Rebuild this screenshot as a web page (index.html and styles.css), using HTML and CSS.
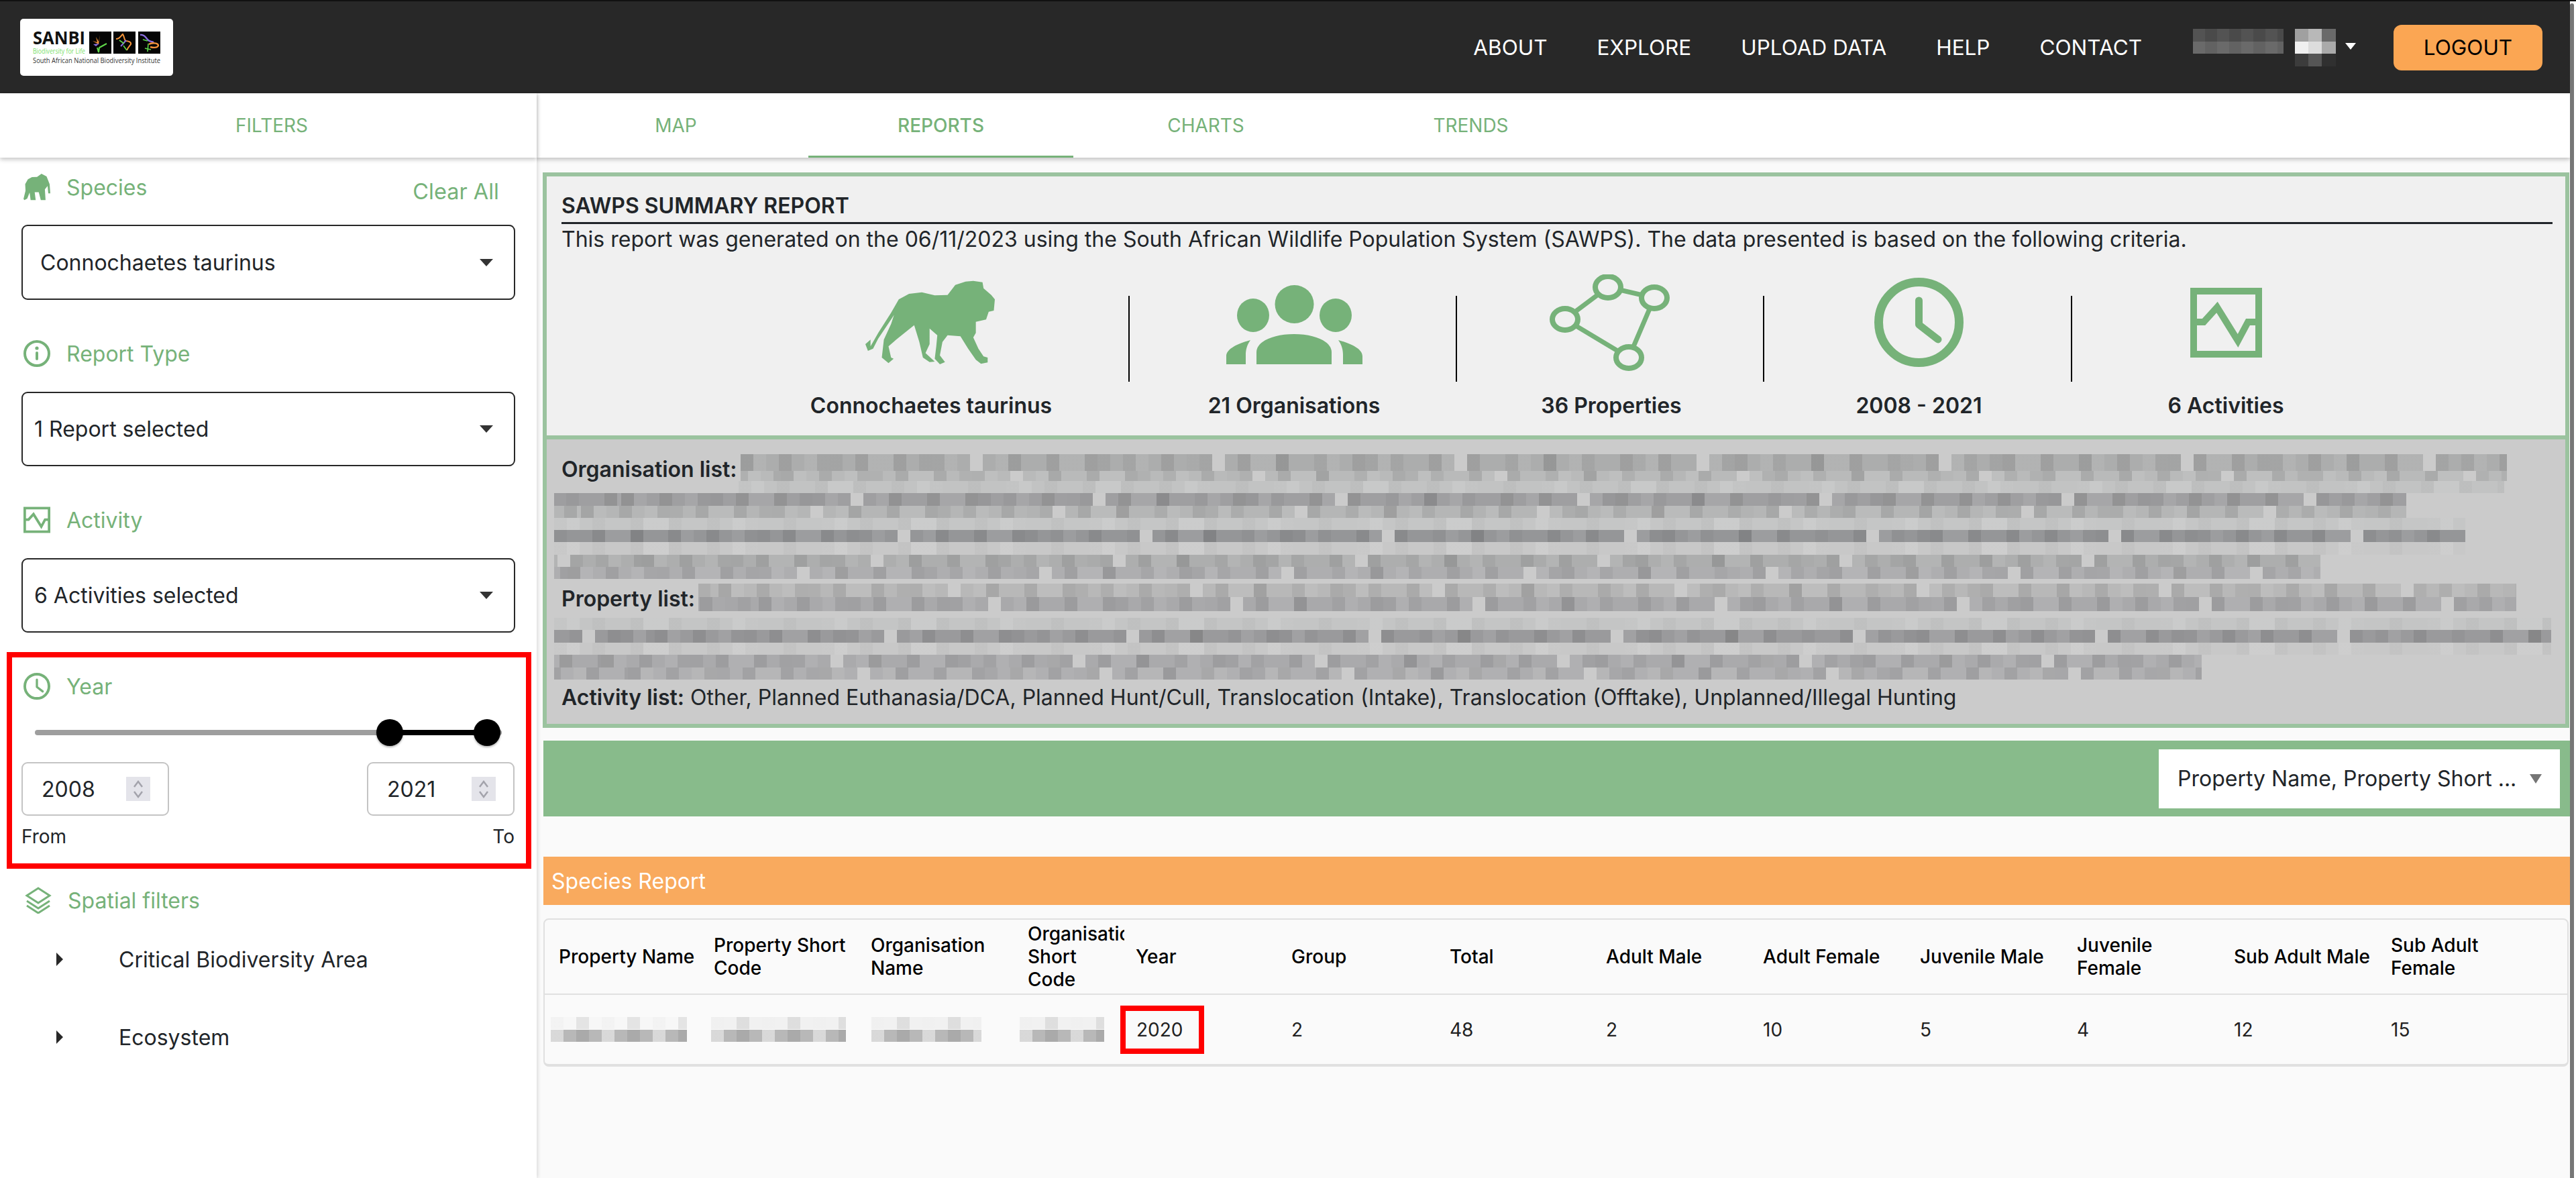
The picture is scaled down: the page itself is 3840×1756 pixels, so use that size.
FILE: index.html
```html
<!DOCTYPE html>
<html>

<head>
<meta charset="utf-8">
<title>SAWPS Reports</title>
<link rel="stylesheet" href="styles.css">
</head>

<body>

	<!--Shared icon shapes-->
	<svg class="icon-defs" xmlns="http://www.w3.org/2000/svg">
		<symbol id="icon-clock" viewBox="0 0 133 133">
			<circle cx="66.5" cy="66.5" r="60" fill="none" stroke="currentColor" stroke-width="13"/>
			<path d="M66.5 34V70L95 92" fill="none" stroke="currentColor" stroke-width="11" stroke-linecap="round" stroke-linejoin="round"/>
		</symbol>
		<symbol id="icon-activity" viewBox="0 0 107 104">
			<rect x="5" y="5" width="97" height="94" fill="none" stroke="currentColor" stroke-width="10"/>
			<path d="M8 51H20L40 29L71 79L86 51H102" fill="none" stroke="currentColor" stroke-width="10"/>
		</symbol>
	</svg>

	<div class="page">
		<!--Top navigation-->
		<header class="topbar">
			<div class="logo">
				<svg width="228" height="85" viewBox="0 0 228 85" xmlns="http://www.w3.org/2000/svg">
					<text x="19" y="38" class="logo-name" textLength="78" lengthAdjust="spacingAndGlyphs">SANBI</text>
					<text x="19" y="52" class="logo-tag" textLength="78" lengthAdjust="spacingAndGlyphs">Biodiversity for Life</text>
					<text x="19" y="66" class="logo-full" textLength="190" lengthAdjust="spacingAndGlyphs">South African National Biodiversity Institute</text>
					<rect x="103" y="19" width="33" height="33" fill="#050505"/>
					<rect x="139" y="19" width="33" height="33" fill="#050505"/>
					<rect x="176" y="19" width="33" height="33" fill="#050505"/>
					<path d="M119 24L117 34L113 27L115 35L108 33L117 38Z" fill="#f5943a"/>
					<path d="M109 38L118 37L113 41Z" fill="#8a6fe0"/>
					<path d="M129 37L118 43L117 50L115 43" fill="none" stroke="#5fd84a" stroke-width="2"/>
					<path d="M143 30C149 30 151 24 153 23C155 26 155 30 157 33C162 33 166 35 165 38C163 41 161 42 159 47" fill="none" stroke="#f5943a" stroke-width="2"/>
					<path d="M150 41L158 32" stroke="#8a6fe0" stroke-width="2"/>
					<path d="M148 32L155 37M154 40L159 47" stroke="#5fd84a" stroke-width="1.6"/>
					<path d="M179 24C184 23 187 27 190 31C193 35 196 33 199 35" fill="none" stroke="#8a6fe0" stroke-width="2.4"/>
					<path d="M192 38C196 35 206 36 206 40C204 44 198 43 194 42" fill="none" stroke="#f5943a" stroke-width="2.4"/>
					<path d="M183 31L190 33M191 37L190 49M186 44L195 46" stroke="#5fd84a" stroke-width="1.6"/>
				</svg>
			</div>
			<nav class="nav">
				<a href="#">ABOUT</a>
				<a href="#">EXPLORE</a>
				<a href="#">UPLOAD DATA</a>
				<a href="#">HELP</a>
				<a href="#">CONTACT</a>
			</nav>
			<div class="user">
				<div class="user-name"></div>
				<div class="user-tail"></div>
				<span class="user-caret"></span>
			</div>
			<button class="logout">LOGOUT</button>
		</header>

		<div class="main">
			<!--Filters column-->
			<aside class="sidebar">
				<div class="side-tab">FILTERS</div>
				<div class="side-body">
					<div class="filter-head filter-head-first">
						<svg class="filter-icon" viewBox="67 785 79 103" preserveAspectRatio="none" xmlns="http://www.w3.org/2000/svg">
							<path d="M67 882L73 850L72 825L80 806L92 798L107 797L120 785L135 795L144 825L146 860L140 860L138 832L130 845L132 886L118 886L112 856L100 856L103 886L88 886L85 857L78 880L70 886Z" fill="currentColor"/>
						</svg>
						<span class="filter-title">Species</span>
						<a class="clear-all" href="#">Clear All</a>
					</div>
					<div class="select select-species"><span>Connochaetes taurinus</span><i class="caret"></i></div>

					<div class="filter-head">
						<svg class="filter-icon" viewBox="0 0 40 40" xmlns="http://www.w3.org/2000/svg">
							<circle cx="20" cy="20" r="18" fill="none" stroke="currentColor" stroke-width="4"/>
							<circle cx="20" cy="12" r="2.6" fill="currentColor"/>
							<rect x="18" y="17" width="4" height="13" rx="2" fill="currentColor"/>
						</svg>
						<span class="filter-title">Report Type</span>
					</div>
					<div class="select"><span>1 Report selected</span><i class="caret"></i></div>

					<div class="filter-head">
						<svg class="filter-icon"><use href="#icon-activity"/></svg>
						<span class="filter-title">Activity</span>
					</div>
					<div class="select"><span>6 Activities selected</span><i class="caret"></i></div>

					<!--Year block has the red marker round it-->
					<div class="year-box">
						<div class="filter-head filter-head-year">
							<svg class="filter-icon"><use href="#icon-clock"/></svg>
							<span class="filter-title">Year</span>
						</div>
						<div class="slider">
							<div class="slider-active"></div>
							<span class="thumb thumb-from"></span>
							<span class="thumb thumb-to"></span>
						</div>
						<div class="year-inputs">
							<div class="year-input">
								<span>2008</span>
								<span class="spinner">
									<svg width="36" height="36" viewBox="0 0 36 36" xmlns="http://www.w3.org/2000/svg"><path d="M12 15L18 7L24 15M12 22L18 30L24 22" fill="none" stroke="#a3a3ab" stroke-width="2.5"/></svg>
								</span>
							</div>
							<div class="year-input">
								<span>2021</span>
								<span class="spinner">
									<svg width="36" height="36" viewBox="0 0 36 36" xmlns="http://www.w3.org/2000/svg"><path d="M12 15L18 7L24 15M12 22L18 30L24 22" fill="none" stroke="#a3a3ab" stroke-width="2.5"/></svg>
								</span>
							</div>
						</div>
						<div class="year-labels"><span>From</span><span>To</span></div>
					</div>

					<div class="filter-head filter-head-spatial">
						<svg class="filter-icon" viewBox="0 0 40 40" xmlns="http://www.w3.org/2000/svg">
							<path d="M20 2L37 13L20 24L3 13Z M3 21L20 32L37 21 M3 28L20 39L37 28" fill="none" stroke="currentColor" stroke-width="3"/>
						</svg>
						<span class="filter-title">Spatial filters</span>
					</div>
					<div class="tree-item"><i class="tree-arrow"></i><span>Critical Biodiversity Area</span></div>
					<div class="tree-item"><i class="tree-arrow"></i><span>Ecosystem</span></div>
				</div>
			</aside>

			<!--Report column-->
			<section class="content">
				<div class="tabs">
					<a class="tab" href="#">MAP</a>
					<a class="tab active" href="#">REPORTS</a>
					<a class="tab" href="#">CHARTS</a>
					<a class="tab" href="#">TRENDS</a>
				</div>

				<div class="summary">
					<div class="summary-top">
						<h1 class="summary-title">SAWPS SUMMARY REPORT</h1>
						<p class="summary-text">This report was generated on the 06/11/2023 using the South African Wildlife Population System (SAWPS). The data presented is based on the following criteria.</p>
						<div class="stats">
							<div class="stat stat-species">
								<div class="stat-icon">
									<svg width="193" height="125" viewBox="640 505 252 375" preserveAspectRatio="none" xmlns="http://www.w3.org/2000/svg">
										<path d="M850 507L868 513L870 540L885 570L892 590L890 640L880 645L875 680L855 690L855 740L850 760L860 810L870 845L878 850L878 872L865 878L855 860L840 810L825 755L800 750L790 780L785 840L795 870L785 880L775 855L778 800L780 750L765 720L765 790L757 830L775 868L765 870L752 850L745 780L735 705L700 770L685 800L690 850L695 855L685 875L672 850L676 770L690 700L700 630L710 610L690 680L665 765L655 810L645 820L640 790L650 770L650 800L665 740L690 650L705 590L725 565L750 558L775 572L800 570L815 525L835 510Z" fill="currentColor"/>
									</svg>
								</div>
								<div class="stat-label">Connochaetes taurinus</div>
							</div>
							<div class="stat">
								<div class="stat-icon">
									<svg class="icon-group" width="203" height="118" viewBox="0 0 203 118" xmlns="http://www.w3.org/2000/svg">
										<ellipse cx="40" cy="45" rx="24" ry="25" fill="currentColor"/>
										<ellipse cx="163" cy="45" rx="24" ry="25" fill="currentColor"/>
										<ellipse cx="101.500" cy="28.500" rx="29" ry="28.500" fill="currentColor" stroke="#f0f0f0" stroke-width="14" paint-order="stroke"/>
										<path d="M45 118V100C45 84 70 73 101 73C132 73 157 84 157 100V118Z" fill="currentColor"/>
										<path d="M36 82C14 88 0 96 0 106V118H29V104C29 96 31 89 36 82Z" fill="currentColor"/>
										<path d="M167 82C189 88 203 96 203 106V118H174V104C174 96 172 89 167 82Z" fill="currentColor"/>
									</svg>
								</div>
								<div class="stat-label">21 Organisations</div>
							</div>
							<div class="stat">
								<div class="stat-icon">
									<svg class="icon-network" width="180" height="144" viewBox="0 0 180 144" xmlns="http://www.w3.org/2000/svg">
										<path d="M87 19L156 35L118 124L23 67Z" fill="none" stroke="currentColor" stroke-width="7"/>
										<ellipse cx="87" cy="19" rx="19" ry="16" fill="#f0f0f0" stroke="currentColor" stroke-width="8"/>
										<ellipse cx="156" cy="35" rx="19" ry="16" fill="#f0f0f0" stroke="currentColor" stroke-width="8"/>
										<ellipse cx="23" cy="67" rx="19" ry="16" fill="#f0f0f0" stroke="currentColor" stroke-width="8"/>
										<ellipse cx="118" cy="124" rx="19" ry="16" fill="#f0f0f0" stroke="currentColor" stroke-width="8"/>
									</svg>
								</div>
								<div class="stat-label">36 Properties</div>
							</div>
							<div class="stat">
								<div class="stat-icon">
									<svg width="133" height="133"><use href="#icon-clock"/></svg>
								</div>
								<div class="stat-label">2008 - 2021</div>
							</div>
							<div class="stat">
								<div class="stat-icon">
									<svg width="107" height="104"><use href="#icon-activity"/></svg>
								</div>
								<div class="stat-label">6 Activities</div>
							</div>
						</div>
					</div>

					<div class="summary-lists">
						<!--Names are hidden in the source picture, so these rows are only the mosaic-->
						<div class="list-first">
							<b class="list-label">Organisation list:</b>
							<div class="mosaic-stack">
								<div class="mosaic m1"></div>
								<div class="mosaic m2"></div>
								<div class="mosaic faint m3"></div>
							</div>
						</div>
						<div class="mosaic m4"></div>
						<div class="mosaic m5"></div>
						<div class="mosaic faint m6"></div>
						<div class="mosaic m7"></div>
						<div class="mosaic faint m8"></div>
						<div class="mosaic m9"></div>
						<div class="mosaic m10"></div>

						<div class="list-first list-property">
							<b class="list-label">Property list:</b>
							<div class="mosaic-stack">
								<div class="mosaic m11"></div>
								<div class="mosaic m12"></div>
							</div>
						</div>
						<div class="mosaic faint m13"></div>
						<div class="mosaic m14"></div>
						<div class="mosaic faint m15"></div>
						<div class="mosaic m16"></div>
						<div class="mosaic m17"></div>

						<p class="activity-list"><b>Activity list:</b> Other, Planned Euthanasia/DCA, Planned Hunt/Cull, Translocation (Intake), Translocation (Offtake), Unplanned/Illegal Hunting</p>
					</div>
				</div>

				<div class="column-bar">
					<div class="column-select"><span>Property Name, Property Short ...</span><i class="caret caret-grey"></i></div>
				</div>

				<div class="report-title">Species Report</div>

				<div class="report-table">
					<div class="row row-head">
						<div class="cell">Property Name</div>
						<div class="cell">Property Short Code</div>
						<div class="cell">Organisation Name</div>
						<div class="cell">Organisation Short Code</div>
						<div class="cell cell-year">Year</div>
						<div class="cell">Group</div>
						<div class="cell">Total</div>
						<div class="cell">Adult Male</div>
						<div class="cell">Adult Female</div>
						<div class="cell">Juvenile Male</div>
						<div class="cell">Juvenile Female</div>
						<div class="cell">Sub Adult Male</div>
						<div class="cell">Sub Adult Female</div>
					</div>
					<div class="row row-data">
						<div class="cell"><div class="blur blur-a"><i></i><i></i></div></div>
						<div class="cell"><div class="blur blur-b"><i></i><i></i></div></div>
						<div class="cell"><div class="blur blur-c"><i></i><i></i></div></div>
						<div class="cell"><div class="blur blur-d"><i></i><i></i></div></div>
						<div class="cell cell-year-mark"><span class="year-mark">2020</span></div>
						<div class="cell">2</div>
						<div class="cell">48</div>
						<div class="cell">2</div>
						<div class="cell">10</div>
						<div class="cell">5</div>
						<div class="cell">4</div>
						<div class="cell">12</div>
						<div class="cell">15</div>
					</div>
				</div>
			</section>
		</div>
	</div>

	<!--Browser scrollbar-->
	<div class="scrollbar"><div class="scroll-thumb"></div></div>

</body>
</html>
```
FILE: styles.css
```css
* {
    box-sizing: border-box;
}
html, body {
    height: 100%;
}
body {
    margin: 0;
    display: flex;
    height: 1756px;
    overflow: hidden;
    background-color: #fff;
    border-top: 2px solid #111;
    font-family: "Inter", "Liberation Sans", sans-serif;
    font-size: 32px;
    color: #212529;
}
a {
    color: inherit;
    text-decoration: none;
}
i {
    display: block;
}
.icon-defs {
    position: absolute;
    width: 0;
    height: 0;
}
.page {
    width: 3831px;
    display: flex;
    flex-direction: column;
}

/* Scrollbar on the far right */
.scrollbar {
    width: 9px;
    padding-top: 3px;
}
.scroll-thumb {
    width: 6px;
    height: 100%;
    background-color: #777;
    border-radius: 3px 3px 0 0;
}

/* Top bar */
.topbar {
    height: 137px;
    flex-shrink: 0;
    display: flex;
    align-items: center;
    padding: 0 41px 0 30px;
    background-color: #282828;
}
.logo {
    width: 228px;
    height: 85px;
    background-color: #fff;
    border-radius: 5px;
}
.logo svg {
    display: block;
}
.logo-name {
    font-family: "Open Sans", sans-serif;
    font-size: 26px;
    font-weight: 700;
    fill: #111;
}
.logo-tag {
    font-family: "Open Sans", sans-serif;
    font-size: 10px;
    fill: #7be06b;
}
.logo-full {
    font-family: "Open Sans", sans-serif;
    font-size: 10px;
    fill: #333;
}
.nav {
    margin-left: auto;
    display: flex;
    gap: 74px;
    color: #fff;
    font-size: 31.5px;
}
.user {
    margin-left: 76px;
    width: 299px;
    height: 56px;
    position: relative;
}
.user-name {
    position: absolute;
    left: 0;
    top: 0;
    width: 135px;
    height: 37px;
    background:
        repeating-linear-gradient(90deg, rgba(255, 255, 255, 0.05) 0 18px, transparent 18px 36px),
        linear-gradient(#4a4a4a 0 19px, #626262 19px 37px);
}
.user-tail {
    position: absolute;
    left: 152px;
    top: 0;
    width: 61px;
    height: 56px;
    background:
        linear-gradient(90deg, #a0a0a0 0 20px, #b8b8b8 20px 40px, #6a6a6a 40px) 0 0 / 100% 19px no-repeat,
        linear-gradient(90deg, #f0f0f0 0 20px, #ddd 20px 40px, #aaa 40px) 0 19px / 100% 18px no-repeat,
        linear-gradient(90deg, #3c3c3c 0 20px, #555 20px 40px, #303030 40px) 0 37px / 100% 19px no-repeat;
}
.user-caret {
    position: absolute;
    left: 227px;
    top: 21px;
    width: 0;
    height: 0;
    border-left: 8px solid transparent;
    border-right: 8px solid transparent;
    border-top: 10px solid #fff;
}
.logout {
    width: 222px;
    height: 68px;
    border: none;
    border-radius: 12px;
    background-color: #fba653;
    color: #000;
    font-family: inherit;
    font-size: 31.5px;
}

.main {
    flex: 1;
    display: flex;
    min-height: 0;
}

/* Filters column */
.sidebar {
    width: 800px;
    flex-shrink: 0;
    background-color: #fff;
    box-shadow: 2px 0 5px rgba(0, 0, 0, 0.12);
    position: relative;
}
.side-tab {
    height: 96px;
    display: flex;
    align-items: center;
    justify-content: center;
    padding-left: 10px;
    color: #76b279;
    font-size: 28px;
    box-shadow: 0 3px 6px rgba(0, 0, 0, 0.22);
}
.side-body {
    padding: 0 32px;
}
.filter-head {
    height: 40px;
    display: flex;
    align-items: center;
    gap: 24px;
    color: #76b279;
    margin: 60px 0 37px 3px;
}
.filter-head-first {
    margin-top: 24px;
    margin-bottom: 36px;
}
.filter-head-year {
    margin: 0 0 0 3px;
}
.filter-head-spatial {
    margin: 27px 0 10px 5px;
}
.filter-icon {
    width: 40px;
    height: 40px;
    flex-shrink: 0;
    color: #76b279;
}
.clear-all {
    margin-left: auto;
    margin-right: 24px;
    margin-top: 13px;
    font-size: 32.5px;
}
.select {
    height: 111px;
    width: 736px;
    display: flex;
    align-items: center;
    justify-content: space-between;
    padding: 0 31px 0 17px;
    border: 2.5px solid #282828;
    border-radius: 9px;
}
.select-species {
    height: 112px;
    padding-left: 26px;
}
.caret {
    width: 0;
    height: 0;
    border-left: 10px solid transparent;
    border-right: 10px solid transparent;
    border-top: 11px solid #333;
}
.caret-grey {
    border-left-width: 9px;
    border-right-width: 9px;
    border-top: 14px solid #757575;
}

/* Year block */
.year-box {
    margin: 29px -24px 0 -22px;
    height: 323px;
    padding: 23px 17px 0 14px;
    border: 8px solid #f00;
}
.slider {
    margin: 29px 19px 0 20px;
    height: 40px;
    position: relative;
    display: flex;
    align-items: center;
}
.slider::before {
    content: "";
    width: 100%;
    height: 8px;
    background-color: #9e9e9e;
    border-radius: 4px;
}
.slider-active {
    position: absolute;
    left: 76%;
    width: 20.800%;
    height: 8px;
    background-color: #000;
}
.thumb {
    position: absolute;
    width: 40px;
    height: 40px;
    margin-left: -20px;
    border-radius: 50%;
    background-color: #000;
    box-shadow: 0 2px 3px rgba(0, 0, 0, 0.3);
}
.thumb-from {
    left: 76%;
}
.thumb-to {
    left: 96.800%;
}
.year-inputs {
    margin-top: 24px;
    display: flex;
    justify-content: space-between;
}
.year-input {
    width: 220px;
    height: 80px;
    display: flex;
    align-items: center;
    justify-content: space-between;
    padding: 0 26px 0 28px;
    border: 2.5px solid #c4c4c4;
    border-radius: 9px;
}
.spinner {
    width: 36px;
    height: 36px;
    background-color: #e4e4ea;
}
.spinner svg {
    display: block;
}
.year-labels {
    margin-top: 13px;
    display: flex;
    justify-content: space-between;
    font-size: 28px;
    line-height: 36px;
}
.tree-item {
    height: 116px;
    display: flex;
    align-items: center;
    padding-left: 52px;
}
.tree-arrow {
    width: 0;
    height: 0;
    margin-right: 83px;
    border-top: 10px solid transparent;
    border-bottom: 10px solid transparent;
    border-left: 10px solid #282828;
}

/* Report column */
.content {
    flex: 1;
    min-width: 0;
    padding-left: 10px;
    background-color: #fafafa;
}
.tabs {
    height: 96px;
    margin-left: -10px;
    padding-left: 10px;
    display: flex;
    background-color: #fff;
    box-shadow: 0 3px 6px rgba(0, 0, 0, 0.22);
}
.tab {
    width: 395px;
    display: flex;
    align-items: center;
    justify-content: center;
    color: #76b279;
    font-size: 28px;
}
.tab.active {
    border-bottom: 3px solid #76b279;
    padding-top: 2px;
    font-weight: 500;
}

/* Summary */
.summary {
    margin: 22px 1px 0 -1px;
    border: 6px solid #9bc39f;
}
.summary-top {
    height: 386px;
    padding: 20px 19px 0 22px;
    background-color: #f0f0f0;
}
.summary-title {
    margin: 0;
    height: 51px;
    font-size: 32px;
    font-weight: 600;
    line-height: 48px;
    border-bottom: 3px solid #212529;
}
.summary-text {
    margin: 0;
    line-height: 46px;
}
.stats {
    margin-top: 28px;
    padding-right: 5px;
    display: grid;
    grid-template-columns: 594px 488px 458px 459px 456px;
    justify-content: center;
}
.stat {
    position: relative;
    display: flex;
    flex-direction: column;
    align-items: center;
}
.stat + .stat::before {
    content: "";
    position: absolute;
    left: -3px;
    top: 33px;
    width: 2px;
    height: 128px;
    background-color: #000;
}
.stat-icon {
    height: 145px;
    display: flex;
    align-items: center;
    color: #76b279;
}
.stat-species .stat-icon {
    margin-right: 4px;
}
.icon-group {
    margin-top: 6px;
}
.icon-network {
    margin-left: -5px;
}
.stat-label {
    margin-top: 28px;
    line-height: 48px;
    font-weight: 600;
}
.summary-lists {
    height: 430px;
    padding: 22px 0 0 11px;
    border-top: 6px solid #9bc39f;
    background-color: #cbcbcb;
}
.list-first {
    display: flex;
    align-items: flex-start;
}
.list-label {
    margin-left: 11px;
    margin-right: 5px;
    font-weight: 600;
    line-height: 46px;
    white-space: nowrap;
}
.list-property {
    margin-top: 7px;
}
.activity-list {
    margin: 4px 0 0 11px;
    line-height: 46px;
}
.activity-list b {
    font-weight: 600;
}

/* Mosaic rows standing in for hidden names */
.mosaic {
    height: 18px;
    background-image:
        repeating-linear-gradient(90deg, transparent 0 342px, #cbcbcb 342px 361px),
        repeating-linear-gradient(90deg, rgba(0, 0, 0, 0.08) 0 19px, transparent 19px 57px),
        repeating-linear-gradient(90deg, rgba(255, 255, 255, 0.07) 0 38px, transparent 38px 95px),
        repeating-linear-gradient(90deg, rgba(0, 0, 0, 0.05) 0 19px, transparent 19px 133px);
}
.faint {
    background-image:
        repeating-linear-gradient(90deg, rgba(0, 0, 0, 0.025) 0 19px, transparent 19px 57px),
        repeating-linear-gradient(90deg, rgba(255, 255, 255, 0.1) 0 38px, transparent 38px 133px);
}
.m1 { width: 2633px; height: 25px; background-color: #acadad; }
.m2 { width: 2633px; height: 15px; background-color: #b9baba; background-position: 60px 0; }
.m3 { width: 2632px; margin-left: -3px; background-color: #c2c3c3; }
.m4 { width: 2761px; height: 19px; background-color: #9f9fa1; background-position: 100px 0; }
.m5 { width: 2761px; background-color: #b5b6b6; background-position: 40px 0; }
.m6 { width: 2849px; background-color: #c5c6c6; }
.m7 { width: 2849px; background-color: #959698; background-position: 170px 0; }
.m8 { width: 2849px; height: 19px; background-color: #c8c8c8; }
.m9 { width: 2633px; background-color: #adaeae; background-position: 130px 0; }
.m10 { width: 2633px; background-color: #aeaeb0; background-position: 20px 0; }
.m11 { width: 2710px; height: 20px; background-color: #b8b8b8; background-position: 30px 0; }
.m12 { width: 2710px; height: 21px; background-color: #a9a9ab; background-position: 90px 0; }
.m13 { width: 2977px; margin-top: 5px; background-color: #c4c5c5; }
.m14 { width: 2977px; height: 19px; background-color: #9a9a9c; background-position: 150px 0; }
.m15 { width: 2977px; background-color: #c8c8c8; }
.m16 { width: 2456px; height: 19px; background-color: #aaaaac; background-position: 70px 0; }
.m17 { width: 2456px; background-color: #b0b0b2; background-position: 110px 0; }

/* Column picker band */
.column-bar {
    margin-top: 19px;
    height: 113px;
    display: flex;
    align-items: center;
    justify-content: flex-end;
    padding-right: 15px;
    background-color: #88bb8b;
}
.column-select {
    width: 598px;
    height: 88px;
    display: flex;
    align-items: center;
    justify-content: space-between;
    padding: 0 27px 0 28px;
    background-color: #fff;
    white-space: nowrap;
}

.report-title {
    margin-top: 60px;
    height: 72px;
    display: flex;
    align-items: center;
    padding-left: 12px;
    background-color: #f9aa5e;
    color: #fff;
}

/* Results table */
.report-table {
    margin: 20px 2px 0 0;
    border: 2px solid #e0e0e0;
    border-bottom-width: 4px;
    border-radius: 8px;
    font-size: 28px;
    color: #000;
}
.row {
    display: grid;
    grid-template-columns: 231px 234px 234px 165px 228px 236px 233px repeat(6, 234px);
    align-items: center;
}
.row-head {
    height: 112px;
    border-bottom: 2px solid #e0e0e0;
    font-weight: 500;
    line-height: 34px;
}
.row-data {
    height: 103px;
    color: #222;
}
.cell {
    padding-left: 21px;
    overflow: hidden;
}
.row-head .cell-year {
    padding-left: 17px;
}
.cell-year-mark {
    padding-left: 0;
    overflow: visible;
}
.year-mark {
    display: flex;
    align-items: center;
    width: 125px;
    height: 72px;
    margin-left: -6px;
    padding-left: 16px;
    border: 8px solid #f00;
}
.blur {
    display: flex;
    flex-direction: column;
}
.blur i {
    height: 18px;
    background-image:
        repeating-linear-gradient(90deg, rgba(255, 255, 255, 0.55) 0 19px, transparent 19px 76px),
        repeating-linear-gradient(90deg, rgba(0, 0, 0, 0.08) 0 19px, transparent 19px 38px);
}
.blur i:first-child {
    background-color: #f1f1f1;
    margin-bottom: 1px;
}
.blur i:last-child {
    background-color: #b8b8b8;
}
.blur-a {
    width: 203px;
    margin-left: -12px;
}
.blur-a i:first-child {
    background-color: #f7f7f7;
}
.blur-b {
    width: 201px;
    margin-left: -4px;
}
.blur-c {
    width: 164px;
    margin-left: 1px;
}
.blur-d {
    width: 126px;
    margin-left: -12px;
}
```
